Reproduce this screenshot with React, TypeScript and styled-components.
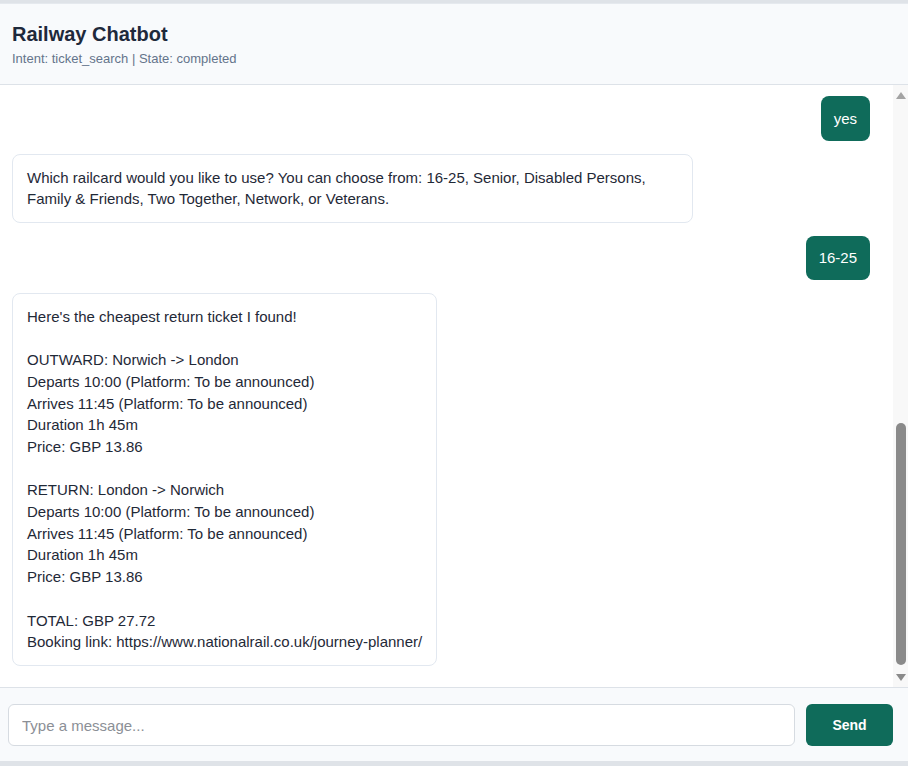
import React from 'react';
import styled, { createGlobalStyle } from 'styled-components';

const GlobalStyle = createGlobalStyle`
	html, body {
		margin: 0;
		padding: 0;
		background: #dfe3e8;
		font-family: "Liberation Sans", Arial, sans-serif;
	}
`;

const TEAL = '#0f6b5a';

type Msg = { from: 'user' | 'bot'; text: string };

const messages: Msg[] = [
	{ from: 'user', text: 'yes' },
	{
		from: 'bot',
		text: 'Which railcard would you like to use? You can choose from: 16-25, Senior, Disabled Persons, Family & Friends, Two Together, Network, or Veterans.',
	},
	{ from: 'user', text: '16-25' },
	{
		from: 'bot',
		text: `Here's the cheapest return ticket I found!

OUTWARD: Norwich -> London
Departs 10:00 (Platform: To be announced)
Arrives 11:45 (Platform: To be announced)
Duration 1h 45m
Price: GBP 13.86

RETURN: London -> Norwich
Departs 10:00 (Platform: To be announced)
Arrives 11:45 (Platform: To be announced)
Duration 1h 45m
Price: GBP 13.86

TOTAL: GBP 27.72
Booking link: https://www.nationalrail.co.uk/journey-planner/`,
	},
];

const App: React.FC = () => {
	return (
		<Page>
			<GlobalStyle />
			<Shell>
				<Header>
					<Title>Railway Chatbot</Title>
					<Status>Intent: ticket_search | State: completed</Status>
				</Header>
				<Body>
					<MessageList>
						{messages.map((m, i) => (
							<Bubble key={i} from={m.from}>
								{m.text}
							</Bubble>
						))}
					</MessageList>
					<ScrollTrack>
						<Arrow dir='up' />
						<Thumb />
						<Arrow dir='down' />
					</ScrollTrack>
				</Body>
				<Footer>
					<Input placeholder='Type a message...' />
					<SendButton>Send</SendButton>
				</Footer>
			</Shell>
		</Page>
	);
};

export default App;

const Page = styled.div`
	padding-top: 3px;
	height: 766px;
	box-sizing: border-box;
	overflow: hidden;
`;

const Shell = styled.div`
	display: flex;
	flex-direction: column;
	height: 757px;
	background: #f8fafc;
	border-top: 1px solid #e5e9ee;
`;

const Header = styled.div`
	height: 81px;
	box-sizing: border-box;
	padding: 18px 12px 0;
	border-bottom: 1px solid #dde2e8;
	background: #f8fafc;
`;

const Title = styled.h1`
	margin: 0;
	font-size: 20px;
	font-weight: 700;
	line-height: 24px;
	color: #1e293b;
`;

const Status = styled.div`
	margin-top: 5px;
	font-size: 13px;
	line-height: 16px;
	color: #64748b;
`;

const Body = styled.div`
	flex: 1;
	display: flex;
	min-height: 0;
	background: #ffffff;
`;

const MessageList = styled.div`
	flex: 1;
	display: flex;
	flex-direction: column;
	justify-content: flex-end;
	gap: 12.5px;
	padding: 10px 23px 21px 12px;
	overflow: hidden;
`;

const Bubble = styled.div<{ from: 'user' | 'bot' }>`
	align-self: ${({ from }) => (from === 'user' ? 'flex-end' : 'flex-start')};
	max-width: 651px;
	white-space: pre-wrap;
	font-size: 15px;
	line-height: 21.7px;
	border-radius: 8px;
	${({ from }) =>
		from === 'user'
			? `
		background: ${TEAL};
		color: #ffffff;
		padding: 11.5px 13px;
	`
			: `
		background: #ffffff;
		color: #1f2937;
		border: 1px solid #e2e8f0;
		padding: 12px 14px;
	`}
`;

const ScrollTrack = styled.div`
	width: 15px;
	display: flex;
	flex-direction: column;
	align-items: center;
	background: #f8f8f8;
	padding-bottom: 6px;
	box-sizing: border-box;
`;

const Arrow = styled.div<{ dir: 'up' | 'down' }>`
	width: 0;
	height: 0;
	margin-top: ${({ dir }) => (dir === 'up' ? '7px' : '9px')};
	border-left: 5px solid transparent;
	border-right: 5px solid transparent;
	${({ dir }) =>
		dir === 'up' ? 'border-bottom: 7px solid #a3a3a3;' : 'border-top: 7px solid #8a8a8a;'}
`;

const Thumb = styled.div`
	margin-top: auto;
	width: 10px;
	height: 242px;
	border-radius: 5px;
	background: #8a8a8a;
`;

const Footer = styled.div`
	display: flex;
	gap: 11px;
	padding: 16px 15px 15px 8px;
	border-top: 1px solid #dde2e8;
	background: #f8fafc;
`;

const Input = styled.input`
	flex: 1;
	height: 42px;
	box-sizing: border-box;
	padding: 0 13px;
	border: 1px solid #d6dbe1;
	border-radius: 6px;
	background: #ffffff;
	font-family: "Liberation Sans", Arial, sans-serif;
	font-size: 15px;
	color: #1f2937;
	outline: none;
	&::placeholder {
		color: #8b8f96;
	}
`;

const SendButton = styled.button`
	width: 87px;
	height: 42px;
	border: none;
	border-radius: 6px;
	background: ${TEAL};
	color: #ffffff;
	font-family: "Liberation Sans", Arial, sans-serif;
	font-size: 14px;
	font-weight: 700;
	cursor: pointer;
`;
